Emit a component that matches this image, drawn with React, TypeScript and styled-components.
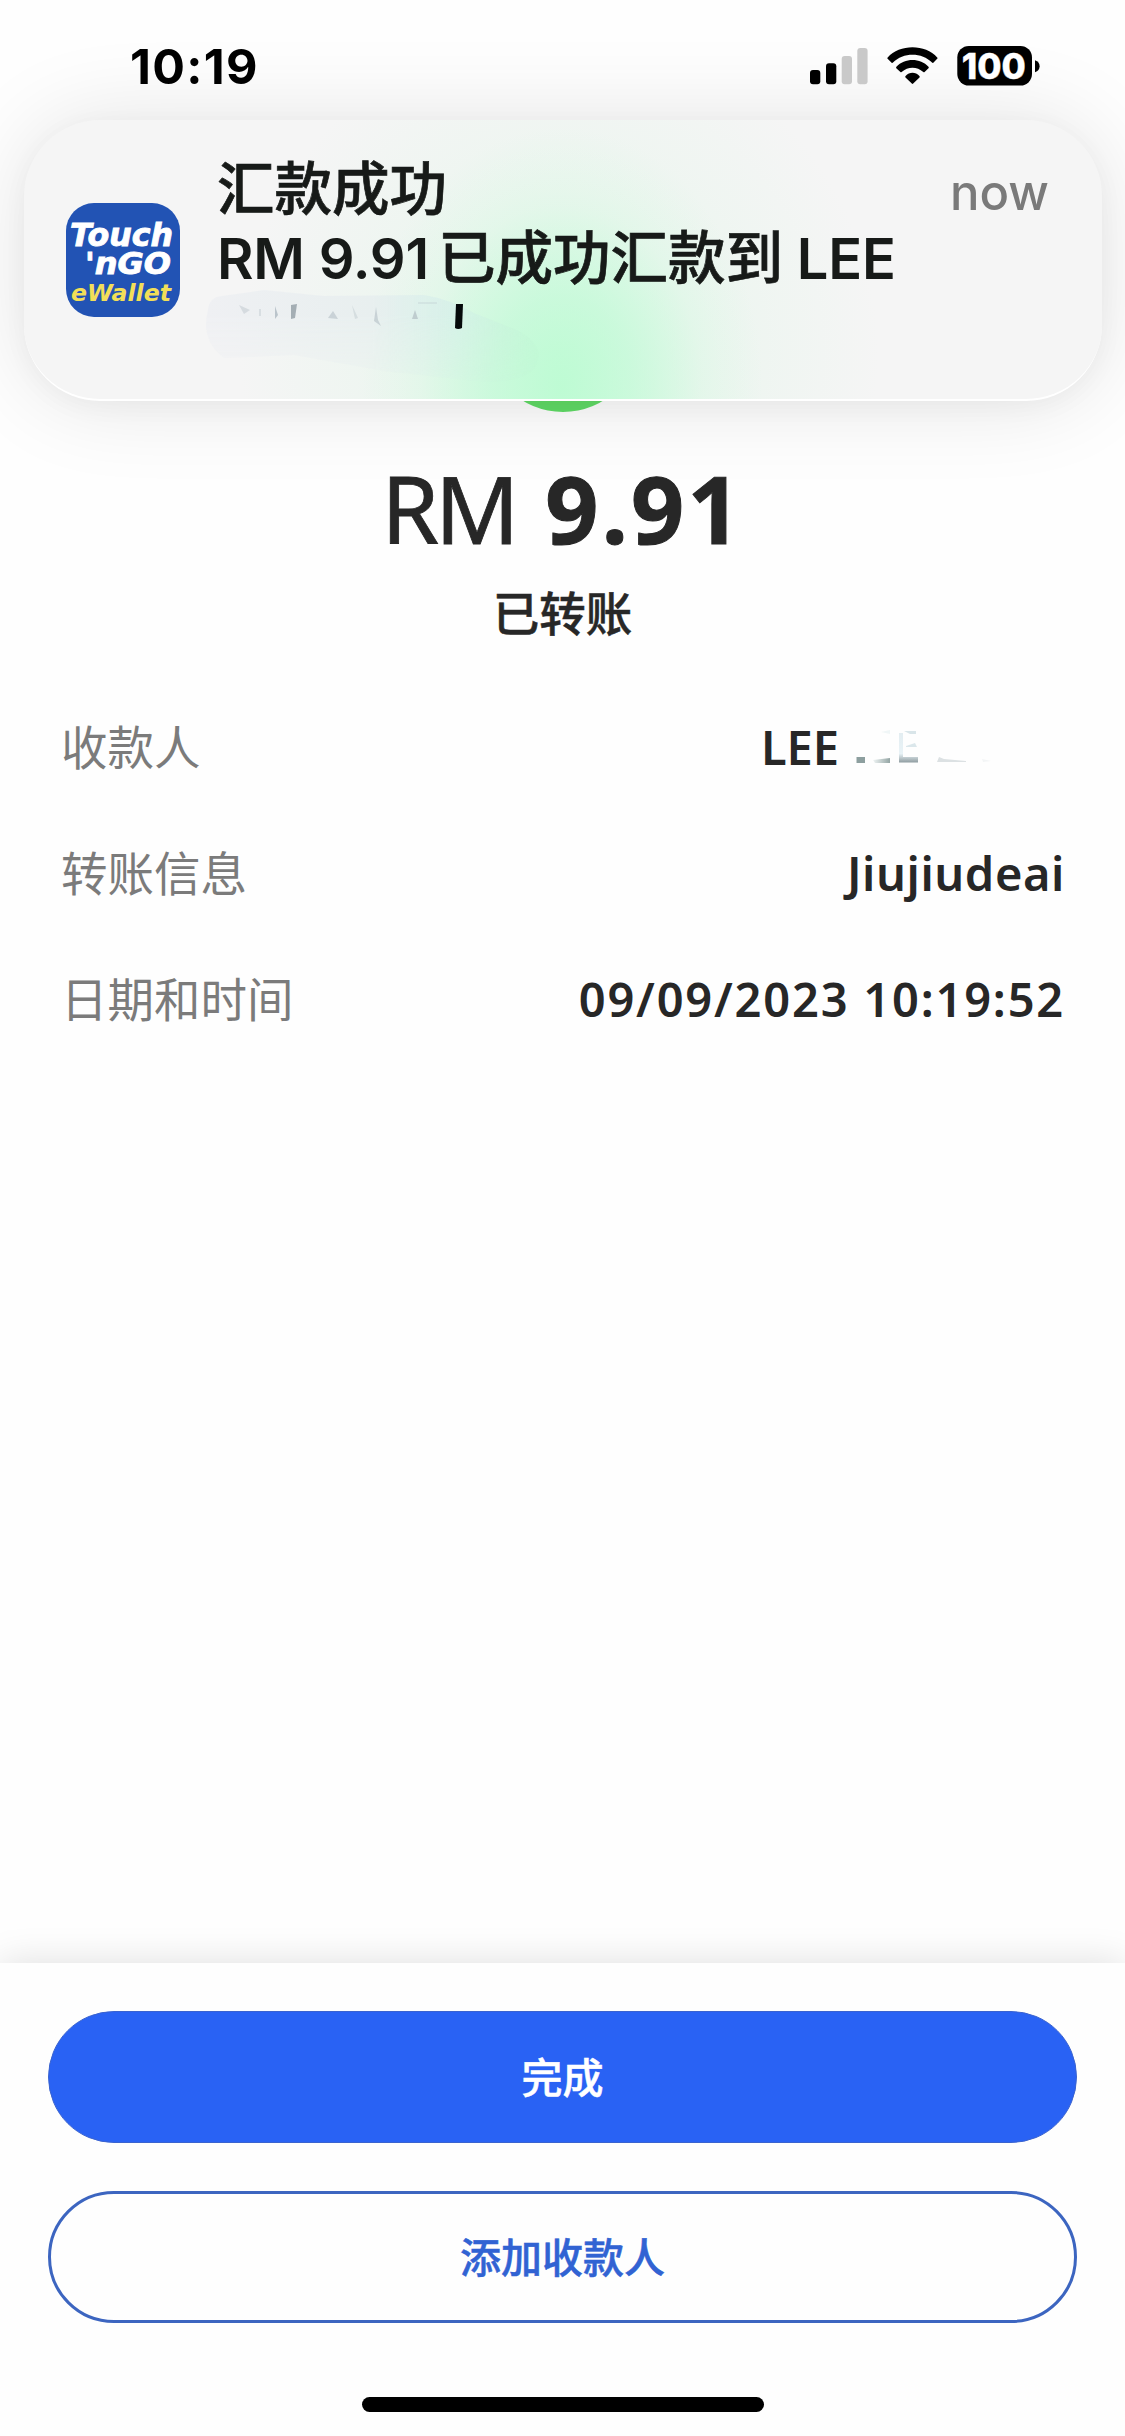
import React from "react";
import styled, { createGlobalStyle } from "styled-components";

const sans = `"Noto Sans", "Noto Sans CJK SC", sans-serif`;
const system = `Inter, "Noto Sans CJK SC", sans-serif`;

const GlobalStyle = createGlobalStyle`
  * { box-sizing: border-box; }
  body { margin: 0; background: #fefefe; }
`;

const Screen = styled.main`
  position: relative;
  display: flex;
  flex-direction: column;
  width: 1125px;
  height: 2436px;
  overflow: hidden;
  background: #fefefe;
  color: #272727;
  font-family: ${sans};
`;

const StatusBar = styled.header`
  position: relative;
  z-index: 2;
  display: flex;
  align-items: center;
  justify-content: space-between;
  height: 134px;
  padding: 0 83px 0 130px;
`;

const Clock = styled.time`
  color: #000;
  font: 700 48.5px/60px ${system};
  letter-spacing: 1.3px;
`;

const StatusIcons = styled.svg`
  display: block;
  width: 232px;
  height: 44px;
`;

const Banner = styled.section`
  position: absolute;
  z-index: 1;
  top: 120px;
  left: 24px;
  display: grid;
  grid-template-columns: 114px 1fr auto;
  column-gap: 37px;
  width: 1078px;
  height: 281px;
  padding: 35px 53px 0 42px;
  border-radius: 76px;
  border-bottom: 2px solid #fff;
  background:
    radial-gradient(ellipse 200px 260px at 538px 268px, rgba(184, 252, 208, 0.85) 0%, rgba(188, 251, 211, 0.62) 35%, rgba(205, 250, 220, 0.25) 70%, rgba(225, 248, 232, 0) 100%),
    radial-gradient(ellipse 320px 330px at 535px 235px, rgba(214, 249, 227, 0.85) 0%, rgba(228, 246, 234, 0.5) 50%, rgba(245, 245, 245, 0) 100%),
    #f5f5f5;
  box-shadow: 0 0 90px rgba(0, 0, 0, 0.11), 0 6px 26px rgba(0, 0, 0, 0.035);
`;

const AppIcon = styled.svg`
  display: block;
  width: 114px;
  height: 114px;
  margin-top: 48px;
`;

const BannerText = styled.div`
  display: flex;
  flex-direction: column;
  min-width: 0;
`;

const BannerLine = styled.p`
  margin: 0;
  height: 69px;
  color: #171a18;
  font: 500 57.5px/69px ${system};
  -webkit-text-stroke: 0.7px currentColor;
  white-space: nowrap;
`;

const Latin = styled.span<{ $after?: number }>`
  margin-right: ${(p) => p.$after ?? 0}px;
  font-size: 56px;
  font-weight: 600;
  letter-spacing: -0.2px;
  -webkit-text-stroke: 0;
`;

const Smudge = styled.svg`
  display: block;
  flex: none;
  width: 350px;
  height: 100px;
  margin: -8px 0 0 -13px;
`;

const When = styled.span`
  padding-top: 3px;
  color: #7a7a7a;
  font: 550 49px/70px ${system};
`;

const Result = styled.section`
  display: flex;
  flex-direction: column;
  align-items: center;
  margin-top: 122px;
`;

const SuccessDisc = styled.div`
  width: 156px;
  height: 156px;
  border-radius: 50%;
  background: #61dc67;
`;

const Amount = styled.h1`
  display: flex;
  margin: 33px 0 0;
  height: 126px;
  font: 400 93px/126px ${sans};
`;

const Currency = styled.span`
  margin-right: 30px;
  letter-spacing: -4px;
  -webkit-text-stroke: 0.8px currentColor;
`;

const Figure = styled.strong`
  font-weight: 700;
  letter-spacing: 3.2px;
  -webkit-text-stroke: 1px currentColor;
`;

const State = styled.p`
  margin: 7px 0 0;
  font: 500 46.5px/70px ${sans};
  -webkit-text-stroke: 0.5px currentColor;
`;

const Details = styled.dl`
  display: flex;
  flex-direction: column;
  margin: 36px 0 0;
  padding: 0 60px 0 61px;
`;

const Row = styled.div`
  display: flex;
  align-items: center;
  justify-content: space-between;
  height: 126px;
`;

const Label = styled.dt`
  color: #7b7b7b;
  font: 400 46.5px/70px ${sans};
`;

const Value = styled.dd<{ $spacing?: number }>`
  display: flex;
  align-items: center;
  margin: 0;
  font: 600 47px/70px ${sans};
  letter-spacing: ${(p) => p.$spacing ?? 0}px;
`;

const ErasedName = styled.svg`
  display: block;
  width: 226px;
  height: 40px;
`;

const Actions = styled.footer`
  display: flex;
  flex-direction: column;
  align-items: center;
  gap: 48px;
  height: 473px;
  margin-top: auto;
  padding: 48px 48px 0;
  background: #fefefe;
  box-shadow: 0 0 36px rgba(0, 0, 0, 0.13);
`;

const Button = styled.button<{ $primary?: boolean }>`
  flex: none;
  width: 1029px;
  height: 132px;
  padding: 0;
  border: ${(p) => (p.$primary ? "1px solid #3a63cf" : "3px solid #3c65c0")};
  border-radius: 66px;
  background: ${(p) => (p.$primary ? "#2962f4" : "#fefefe")};
  color: ${(p) => (p.$primary ? "#fff" : "#3163d3")};
  font: 500 41px/60px ${sans};
  -webkit-text-stroke: 0.5px currentColor;
`;

const HomeBar = styled.div`
  width: 402px;
  height: 15px;
  margin-top: 26px;
  border-radius: 8px;
  background: #000;
`;

const Indicators = () => (
  <StatusIcons viewBox="810 45 232 44">
    <rect x="810" y="70" width="10.3" height="14.3" rx="3" />
    <rect x="826" y="63.3" width="10.3" height="21" rx="3" />
    <rect x="841.7" y="56" width="10.3" height="28.3" rx="3" fill="#c9c9c9" />
    <rect x="857.3" y="48" width="10.3" height="36.3" rx="3" fill="#c9c9c9" />
    <path d="M887.6 58.8Q887 58.2 887.7 57.5C899.5 43.8 925.5 43.8 937.2 57.5Q937.9 58.2 937.2 58.8L933.3 62.7Q932.7 63.3 932 62.6C922 52.2 903 52.2 893 62.6Q892.3 63.3 891.6 62.7Z" />
    <path d="M896.3 68.2Q895.7 67.5 896.4 66.8C904.5 57.8 920.5 57.8 928.5 66.8Q929.2 67.5 928.5 68.2L924.6 72Q924 72.6 923.3 72C917 66.3 908 66.3 901.6 72Q901 72.6 900.4 72Z" />
    <path d="M905.5 77.4Q904.8 76.7 905.6 76C909.5 71.8 915.5 71.8 919.4 76Q920.1 76.7 919.5 77.4L913.2 83.6Q912.5 84.2 911.8 83.6Z" />
    <rect x="957.3" y="46" width="74.7" height="39.6" rx="11.5" />
    <path d="M1035 60.3Q1039.6 62 1039.6 66.3T1035 72.3Z" />
    <text x="993.7" y="78.9" textAnchor="middle" fill="#fff" stroke="#fff" strokeWidth="0.4" fontFamily={system} fontSize="35" fontWeight="800" textLength="64" lengthAdjust="spacingAndGlyphs">100</text>
  </StatusIcons>
);

const WalletIcon = () => (
  <AppIcon viewBox="0 0 114 114">
    <rect width="114" height="114" rx="28" fill="#2253b4" />
    <g fontFamily='"DejaVu Sans", sans-serif' fontWeight="700" fontStyle="italic">
      <text fill="#fff" stroke="#fff" strokeWidth="0.9">
        <tspan x="4" y="42.8" fontSize="31.5" textLength="103" lengthAdjust="spacingAndGlyphs">Touch</tspan>
        <tspan x="19" y="71" fontSize="31" textLength="86" lengthAdjust="spacingAndGlyphs">'nGO</tspan>
      </text>
      <text x="5" y="98" fontSize="23" fill="#f2df58" textLength="100" lengthAdjust="spacingAndGlyphs">eWallet</text>
    </g>
  </AppIcon>
);

const ErasedLine = () => (
  <Smudge viewBox="0 0 350 100">
    <defs>
      <linearGradient id="wash" x1="0" x2="1">
        <stop offset="0" stopColor="#eff0f3" />
        <stop offset="0.5" stopColor="#e8efef" />
        <stop offset="0.75" stopColor="#d5f0e8" stopOpacity="0.85" />
        <stop offset="1" stopColor="#bff5d3" stopOpacity="0.4" />
      </linearGradient>
      <linearGradient id="fall" x1="0" x2="0" y1="0" y2="1">
        <stop offset="0.3" stopColor="#fff" />
        <stop offset="1" stopColor="#fff" stopOpacity="0.15" />
      </linearGradient>
      <mask id="fade"><rect width="350" height="100" fill="url(#fall)" /></mask>
    </defs>
    <path d="M4 25Q5 12 18 11L60 5L120 11L220 10Q245 14 270 28L310 44Q345 60 330 84Q315 100 270 96L180 86L90 70L20 73Q-4 55 4 25Z" fill="url(#wash)" mask="url(#fade)" />
    <g fill="#aab5bd">
      <path d="M35 20L46 25L40 29Z" opacity=".35" />
      <rect x="55" y="24" width="2" height="7" opacity=".3" />
      <path d="M71 21L74 30L71 34Z" opacity=".75" />
      <path d="M87 20L93 19L91 33L87 34Z" fill="#929da5" opacity=".8" />
      <path d="M124 33L129 26L134 34Z" opacity=".5" />
      <path d="M148 20L154 33L151 34Z" opacity=".3" />
      <path d="M172 22L174 35L177 41L170 36Z" opacity=".5" />
      <path d="M208 34L211 25L214 34Z" opacity=".6" />
      <path d="M214 17H233V19H214Z" opacity=".2" />
    </g>
    <path d="M252 19H259L258 43Q254 45 251 43Z" fill="#050a0b" />
  </Smudge>
);

const ErasedPart = () => (
  <ErasedName viewBox="838 729 226 40">
    <defs>
      <linearGradient id="ghost" x1="0" x2="0" y1="0" y2="1">
        <stop offset="0" stopColor="#e3edf1" />
        <stop offset="0.7" stopColor="#e9f3f7" />
        <stop offset="1" stopColor="#8f9ca0" />
      </linearGradient>
      <linearGradient id="trail" x1="0" x2="1" y1="0" y2="0">
        <stop offset="0" stopColor="#eff4f4" />
        <stop offset="1" stopColor="#94a5a4" />
      </linearGradient>
    </defs>
    <rect x="855.5" y="759" width="8.5" height="6" fill="#8d9f9f" />
    <path d="M872 762L889 760V765H874Z" fill="url(#trail)" />
    <path d="M880 734L889 732V736Z" fill="#f0f6f7" />
    <path d="M898 735H902V759H917V764.5H898Z" fill="url(#ghost)" />
    <path d="M903 733H915V736H909Z" fill="#d9e5e9" />
    <path d="M905 748L914 745L916 749H905Z" fill="#dbe7eb" />
    <path d="M936 764L938 759L943 761L965 763V764Z" fill="#dce1e3" />
    <path d="M981 761L990 763L982 764Z" fill="#f3f5f6" />
  </ErasedName>
);

export default function App() {
  return (
    <Screen>
      <GlobalStyle />
      <StatusBar>
        <Clock>10:19</Clock>
        <Indicators />
      </StatusBar>
      <Banner>
        <WalletIcon />
        <BannerText>
          <BannerLine>汇款成功</BannerLine>
          <BannerLine>
            <Latin $after={9}>RM 9.91</Latin>已成功汇款到<Latin> LEE</Latin>
          </BannerLine>
          <ErasedLine />
        </BannerText>
        <When>now</When>
      </Banner>
      <Result>
        <SuccessDisc />
        <Amount>
          <Currency>RM</Currency>
          <Figure>9.91</Figure>
        </Amount>
        <State>已转账</State>
      </Result>
      <Details>
        <Row>
          <Label>收款人</Label>
          <Value>LEE<ErasedPart /></Value>
        </Row>
        <Row>
          <Label>转账信息</Label>
          <Value $spacing={0.6}>Jiujiudeai</Value>
        </Row>
        <Row>
          <Label>日期和时间</Label>
          <Value $spacing={1.8}>09/09/2023 10:19:52</Value>
        </Row>
      </Details>
      <Actions>
        <Button $primary>完成</Button>
        <Button>添加收款人</Button>
        <HomeBar />
      </Actions>
    </Screen>
  );
}
